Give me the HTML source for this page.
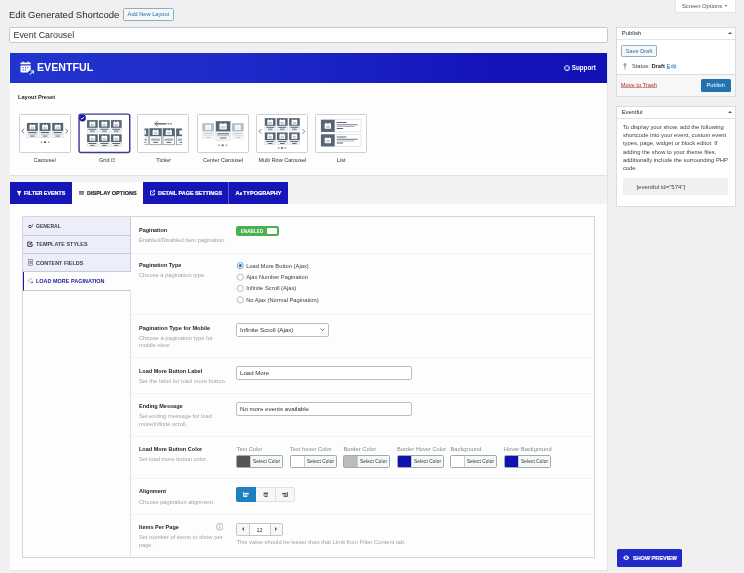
<!DOCTYPE html>
<html>
<head>
<meta charset="utf-8">
<title>Edit Generated Shortcode</title>
<style>
*{box-sizing:border-box;margin:0;padding:0}
html,body{width:744px;height:573px;overflow:hidden;background:#f0f0f1;font-family:"Liberation Sans",sans-serif;color:#1d2327}
#root{will-change:transform;position:absolute;left:0;top:0;width:744px;height:573px;overflow:hidden}
.a{position:absolute}
.t{position:absolute;white-space:nowrap;line-height:1}
.b{font-weight:bold}
.box{position:absolute;background:#fff;border:1px solid #dbdcde}
/* labels in settings rows */
.lbl{position:absolute;left:138.9px;white-space:nowrap;line-height:1;font-weight:bold;font-size:5.7px;color:#23282d;letter-spacing:.05px}
.dsc{position:absolute;left:138.9px;white-space:nowrap;line-height:1;font-size:5.6px;color:#a3a3a3}
.div{position:absolute;left:131px;width:461px;height:1px;background:#f3f3f3}
.inp{position:absolute;background:#fff;border:1px solid #bcbec2;border-radius:2px}
.itx{position:absolute;white-space:nowrap;line-height:1;font-size:5.7px;color:#2c3338}
.nav{position:absolute;left:23px;width:107px;height:18.2px;background:#eeeefa;border-bottom:1px solid #c9c9dc}
.navt{position:absolute;left:35.8px;white-space:nowrap;line-height:1;font-weight:bold;font-size:5.4px;color:#3c3c4a;letter-spacing:.08px}
.tab{position:absolute;top:182.3px;height:21.7px;background:#1515b8}
.tabt{position:absolute;white-space:nowrap;line-height:1;font-weight:bold;font-size:5.3px;color:#fff;letter-spacing:.05px;-webkit-text-stroke:.2px currentColor}
.pre{position:absolute;top:113.8px;width:51.6px;height:39px;background:#fff;border:1px solid #d0d0d0;border-radius:1.5px}
.prel{position:absolute;top:158.2px;white-space:nowrap;line-height:1;font-size:5.5px;color:#333}
.cbl{position:absolute;top:446.6px;white-space:nowrap;line-height:1;font-size:5.6px;color:#8a8a8a}
.cb{position:absolute;top:455px;width:47px;height:13px;background:#f6f7f7;border:.9px solid #9aacb8;border-radius:1.5px;overflow:hidden}
.cb i{position:absolute;left:0;top:0;width:13.7px;height:100%;border-right:.8px solid #c5ced6}
.cb span{position:absolute;left:14.2px;right:0;top:3.5px;text-align:center;white-space:nowrap;line-height:1;font-size:4.78px;letter-spacing:.1px;color:#2c3338}
.rad{position:absolute;left:237px;width:6.6px;height:6.6px;border:.8px solid #8c8f94;border-radius:50%;background:#fff}
.radt{position:absolute;left:246.2px;white-space:nowrap;line-height:1;font-size:5.6px;color:#3c434a}
</style>
</head>
<body>
<div id="root">

<!-- Screen options -->
<div class="a" style="left:675px;top:-1px;width:61px;height:14px;background:#fff;border:1px solid #e4e5e7;border-top:none;border-radius:0 0 2px 2px"></div>
<div class="t" style="left:681.9px;top:4px;font-size:5.85px;color:#50575e">Screen Options</div>
<div class="a" style="left:724.8px;top:5.100px;width:0;height:0;border-left:1.800px solid transparent;border-right:1.800px solid transparent;border-top:2.600px solid #50575e"></div>

<!-- Page title -->
<div class="t" id="h1" style="left:9px;top:10px;color:#1d2327;font-size:9.55px">Edit Generated Shortcode</div>
<div class="a" style="left:122.6px;top:7.9px;width:51.3px;height:12.7px;background:#f6f7f7;border:.9px solid #8fadc4;border-radius:1.5px"></div>
<div class="t" id="addnew" style="left:127.6px;top:12.2px;font-size:5.68px;color:#2271b1">Add New Layout</div>

<!-- Title input -->
<div class="a" style="left:9px;top:27px;width:599px;height:16px;background:#fff;border:1px solid #c8c9cc;border-radius:2px"></div>
<div class="t" id="titleval" style="left:13.5px;top:30.7px;font-size:8.88px;color:#2c3338">Event Carousel</div>

<!-- Main white container -->
<div class="a" style="left:9px;top:53px;width:599px;height:518px;background:#fdfdfd;border:1px solid #e3e4e6;border-left-color:#f5f5f6;border-bottom-color:#e6e7e9;border-top:none"></div>

<!-- Blue header -->
<div class="a" style="left:9.6px;top:53px;width:597.4px;height:30px;background:linear-gradient(90deg,#2234d0 0%,#1d29c8 40%,#1414b9 80%,#1111b6 100%)"></div>
<svg class="a" style="left:20.2px;top:60.5px" width="14.5" height="14" viewBox="0 0 14.5 14">
  <rect x=".5" y="1.400" width="10.200" height="1.900" rx=".5" fill="#fff"/>
  <rect x="2.700" y=".4" width="1.100" height="1.600" rx=".3" fill="#fff"/><rect x="7.600" y=".4" width="1.100" height="1.600" rx=".3" fill="#fff"/>
  <path d="M.5 4.500h10.200v3.900L7.700 11.500H1.400a.9.900 0 0 1-.9-.9z" fill="#fff"/>
  <path d="M2.500 6.200h1.200v1.100H2.500zM4.900 6.200h1.200v1.100H4.900zM7.300 6.200h1.200v1.100H7.300zM2.500 8.400h1.200v1.100H2.500zM4.900 8.400h1.200v1.100H4.900z" fill="#2435cf"/>
  <path d="M10 13.300l3.300-3M11.200 9.900h2.400v2.400" fill="none" stroke="#b9defe" stroke-width="1.100" stroke-linecap="round" stroke-linejoin="round"/>
</svg>
<div class="t b" id="logo" style="left:36.7px;top:61.9px;color:#fff;font-size:11.5px;transform-origin:0 0;transform:scaleX(.925)">EVENTFUL</div>
<svg class="a" style="left:563.700px;top:65.100px" width="6" height="6" viewBox="0 0 6 6"><circle cx="3" cy="3" r="2.300" fill="none" stroke="#e4e7ff" stroke-width="1.150"/><path d="M1.200 1.200l1 1M4.800 1.200l-1 1M1.200 4.800l1-1M4.800 4.800l-1-1" stroke="#1616b6" stroke-width=".5"/></svg>
<div class="t b" id="support" style="left:571.7px;top:64.7px;font-size:6.29px;color:#fff">Support</div>

<!-- Layout Preset -->
<div class="t b" id="lp" style="left:18.4px;top:93.6px;color:#23282d;font-size:6.0px;letter-spacing:0;transform-origin:0 0;transform:scaleX(0.9348)">Layout Preset</div>
<div id="presets">
<div class="pre" style="left:19px;top:114px;width:52px;height:39px"></div>
<svg class="a" style="left:76px;top:111px" width="58" height="45" viewBox="76 111 58 45"><rect x="79.050" y="114.100" width="50.700" height="38.300" rx="2" fill="#fff" stroke="#3b3b98" stroke-width="1.450"/></svg>
<div class="pre" style="left:137px;top:114px;width:52px;height:39px"></div>
<div class="pre" style="left:197px;top:114px;width:52px;height:39px"></div>
<div class="pre" style="left:256px;top:114px;width:52px;height:39px"></div>
<div class="pre" style="left:315px;top:114px;width:52px;height:39px"></div>
<svg class="a" style="left:0;top:100px" width="380" height="60" viewBox="0 100 380 60"><rect x="27" y="123" width="10.8" height="14.8" fill="#f3f4f6" stroke="#c5cad0" stroke-width=".45"/><rect x="27" y="123" width="10.8" height="7.9" fill="#566473"/><rect x="29.5" y="124.9" width="5.8" height="4.7" rx=".5" fill="#fff"/><rect x="30.4" y="124.1" width="0.8" height="1.300" fill="#fff"/><rect x="33.6" y="124.1" width="0.8" height="1.300" fill="#fff"/><path d="M30.5 127.25h3.8M30.5 128.45h3.8M31.7 126.55v2.600M33.1 126.55v2.600" stroke="#566473" stroke-width=".45" opacity=".55"/><rect x="28.3" y="132" width="8.2" height="1" fill="#566473"/><rect x="28.3" y="133.7" width="8.2" height=".8" fill="#a9b0b8"/><rect x="30.02" y="135.6" width="4.75" height=".9" fill="#566473"/><rect x="39.65" y="123" width="10.8" height="14.8" fill="#f3f4f6" stroke="#c5cad0" stroke-width=".45"/><rect x="39.65" y="123" width="10.8" height="7.9" fill="#566473"/><rect x="42.15" y="124.9" width="5.8" height="4.7" rx=".5" fill="#fff"/><rect x="43.05" y="124.1" width="0.8" height="1.300" fill="#fff"/><rect x="46.25" y="124.1" width="0.8" height="1.300" fill="#fff"/><path d="M43.15 127.25h3.8M43.15 128.45h3.8M44.35 126.55v2.600M45.75 126.55v2.600" stroke="#566473" stroke-width=".45" opacity=".55"/><rect x="40.95" y="132" width="8.2" height="1" fill="#566473"/><rect x="40.95" y="133.7" width="8.2" height=".8" fill="#a9b0b8"/><rect x="42.67" y="135.6" width="4.75" height=".9" fill="#566473"/><rect x="52.3" y="123" width="10.8" height="14.8" fill="#f3f4f6" stroke="#c5cad0" stroke-width=".45"/><rect x="52.3" y="123" width="10.8" height="7.9" fill="#566473"/><rect x="54.8" y="124.9" width="5.8" height="4.7" rx=".5" fill="#fff"/><rect x="55.7" y="124.1" width="0.8" height="1.300" fill="#fff"/><rect x="58.9" y="124.1" width="0.8" height="1.300" fill="#fff"/><path d="M55.8 127.25h3.8M55.8 128.45h3.8M57 126.55v2.600M58.4 126.55v2.600" stroke="#566473" stroke-width=".45" opacity=".55"/><rect x="53.6" y="132" width="8.2" height="1" fill="#566473"/><rect x="53.6" y="133.7" width="8.2" height=".8" fill="#a9b0b8"/><rect x="55.32" y="135.6" width="4.75" height=".9" fill="#566473"/><path d="M24.2 128.8L21.9 131.1L24.2 133.4" fill="none" stroke="#566473" stroke-width=".85"/><path d="M65.5 128.8L67.8 131.1L65.5 133.4" fill="none" stroke="#566473" stroke-width=".85"/><circle cx="41.5" cy="142.2" r="1" fill="#a4abb3"/><circle cx="45.05" cy="142.2" r="1.100" fill="#566473"/><circle cx="48.6" cy="142.2" r="1" fill="#a4abb3"/><rect x="87.1" y="120.1" width="10.6" height="12.4" fill="#f3f4f6" stroke="#c5cad0" stroke-width=".45"/><rect x="87.1" y="120.1" width="10.6" height="7.7" fill="#566473"/><rect x="89.5" y="121.9" width="5.8" height="4.7" rx=".5" fill="#fff"/><rect x="90.4" y="121.1" width="0.8" height="1.300" fill="#fff"/><rect x="93.6" y="121.1" width="0.8" height="1.300" fill="#fff"/><path d="M90.5 124.25h3.8M90.5 125.45h3.8M91.7 123.55v2.600M93.1 123.55v2.600" stroke="#566473" stroke-width=".45" opacity=".55"/><rect x="88.4" y="128.8" width="8" height="1" fill="#566473"/><rect x="90.1" y="130.7" width="4.600" height=".9" fill="#566473"/><rect x="99.05" y="120.1" width="10.6" height="12.4" fill="#f3f4f6" stroke="#c5cad0" stroke-width=".45"/><rect x="99.05" y="120.1" width="10.6" height="7.7" fill="#566473"/><rect x="101.45" y="121.9" width="5.8" height="4.7" rx=".5" fill="#fff"/><rect x="102.35" y="121.1" width="0.8" height="1.300" fill="#fff"/><rect x="105.55" y="121.1" width="0.8" height="1.300" fill="#fff"/><path d="M102.45 124.25h3.8M102.45 125.45h3.8M103.65 123.55v2.600M105.05 123.55v2.600" stroke="#566473" stroke-width=".45" opacity=".55"/><rect x="100.35" y="128.8" width="8" height="1" fill="#566473"/><rect x="102.05" y="130.7" width="4.600" height=".9" fill="#566473"/><rect x="111" y="120.1" width="10.6" height="12.4" fill="#f3f4f6" stroke="#c5cad0" stroke-width=".45"/><rect x="111" y="120.1" width="10.6" height="7.7" fill="#566473"/><rect x="113.4" y="121.9" width="5.8" height="4.7" rx=".5" fill="#fff"/><rect x="114.3" y="121.1" width="0.8" height="1.300" fill="#fff"/><rect x="117.5" y="121.1" width="0.8" height="1.300" fill="#fff"/><path d="M114.4 124.25h3.8M114.4 125.45h3.8M115.6 123.55v2.600M117 123.55v2.600" stroke="#566473" stroke-width=".45" opacity=".55"/><rect x="112.3" y="128.8" width="8" height="1" fill="#566473"/><rect x="114" y="130.7" width="4.600" height=".9" fill="#566473"/><rect x="87.1" y="134.3" width="10.6" height="12.4" fill="#f3f4f6" stroke="#c5cad0" stroke-width=".45"/><rect x="87.1" y="134.3" width="10.6" height="7.7" fill="#566473"/><rect x="89.5" y="136.1" width="5.8" height="4.7" rx=".5" fill="#fff"/><rect x="90.4" y="135.3" width="0.8" height="1.300" fill="#fff"/><rect x="93.6" y="135.3" width="0.8" height="1.300" fill="#fff"/><path d="M90.5 138.45h3.8M90.5 139.65h3.8M91.7 137.75v2.600M93.1 137.75v2.600" stroke="#566473" stroke-width=".45" opacity=".55"/><rect x="88.4" y="143" width="8" height="1" fill="#566473"/><rect x="90.1" y="144.9" width="4.600" height=".9" fill="#566473"/><rect x="99.05" y="134.3" width="10.6" height="12.4" fill="#f3f4f6" stroke="#c5cad0" stroke-width=".45"/><rect x="99.05" y="134.3" width="10.6" height="7.7" fill="#566473"/><rect x="101.45" y="136.1" width="5.8" height="4.7" rx=".5" fill="#fff"/><rect x="102.35" y="135.3" width="0.8" height="1.300" fill="#fff"/><rect x="105.55" y="135.3" width="0.8" height="1.300" fill="#fff"/><path d="M102.45 138.45h3.8M102.45 139.65h3.8M103.65 137.75v2.600M105.05 137.75v2.600" stroke="#566473" stroke-width=".45" opacity=".55"/><rect x="100.35" y="143" width="8" height="1" fill="#566473"/><rect x="102.05" y="144.9" width="4.600" height=".9" fill="#566473"/><rect x="111" y="134.3" width="10.6" height="12.4" fill="#f3f4f6" stroke="#c5cad0" stroke-width=".45"/><rect x="111" y="134.3" width="10.6" height="7.7" fill="#566473"/><rect x="113.4" y="136.1" width="5.8" height="4.7" rx=".5" fill="#fff"/><rect x="114.3" y="135.3" width="0.8" height="1.300" fill="#fff"/><rect x="117.5" y="135.3" width="0.8" height="1.300" fill="#fff"/><path d="M114.4 138.45h3.8M114.4 139.65h3.8M115.6 137.75v2.600M117 137.75v2.600" stroke="#566473" stroke-width=".45" opacity=".55"/><rect x="112.3" y="143" width="8" height="1" fill="#566473"/><rect x="114" y="144.9" width="4.600" height=".9" fill="#566473"/><rect x="144.5" y="128.5" width="3.700" height="16.300" fill="#fff"/><rect x="144.5" y="128.5" width="3.700" height="7.700" fill="#566473"/><rect x="144.5" y="130.300" width="1.600" height="4.200" fill="#fff"/><rect x="147.900" y="128.5" width=".5" height="16.300" fill="#566473"/><rect x="144.5" y="138.500" width="2.400" height="2.300" fill="#a9b0b8"/><rect x="144.5" y="141.900" width="1.600" height="1" fill="#566473"/><path d="M144.500 144.600h3.700" stroke="#566473" stroke-width=".5"/><rect x="149.8" y="128.5" width="11.600" height="16.300" fill="#fff" stroke="#566473" stroke-width=".55"/><rect x="149.8" y="128.5" width="11.600" height="7.700" fill="#566473"/><rect x="152.56" y="130.18" width="6.09" height="4.94" rx=".5" fill="#fff"/><rect x="153.5" y="129.38" width="0.84" height="1.300" fill="#fff"/><rect x="156.86" y="129.38" width="0.84" height="1.300" fill="#fff"/><path d="M153.56 132.65h4.09M153.56 133.85h4.09M154.87 131.95v2.600M156.34 131.95v2.600" stroke="#566473" stroke-width=".45" opacity=".55"/><rect x="151.3" y="138.500" width="8.600" height="2.300" fill="#a9b0b8"/><rect x="153.2" y="141.900" width="4.800" height="1" fill="#566473"/><rect x="163" y="128.5" width="11.600" height="16.300" fill="#fff" stroke="#566473" stroke-width=".55"/><rect x="163" y="128.5" width="11.600" height="7.700" fill="#566473"/><rect x="165.76" y="130.18" width="6.09" height="4.94" rx=".5" fill="#fff"/><rect x="166.7" y="129.38" width="0.84" height="1.300" fill="#fff"/><rect x="170.06" y="129.38" width="0.84" height="1.300" fill="#fff"/><path d="M166.76 132.65h4.09M166.76 133.85h4.09M168.06 131.95v2.600M169.54 131.95v2.600" stroke="#566473" stroke-width=".45" opacity=".55"/><rect x="164.5" y="138.500" width="8.600" height="2.300" fill="#a9b0b8"/><rect x="166.4" y="141.900" width="4.800" height="1" fill="#566473"/><rect x="176.300" y="128.5" width="5.800" height="16.300" fill="#fff"/><rect x="176.300" y="128.5" width="5.800" height="7.700" fill="#566473"/><rect x="176.100" y="128.5" width=".5" height="16.300" fill="#566473"/><rect x="179.400" y="130.300" width="2.700" height="4.200" fill="#fff"/><rect x="177.800" y="138.500" width="4.300" height="2.300" fill="#a9b0b8"/><rect x="179.700" y="141.900" width="2.400" height="1" fill="#566473"/><path d="M176.300 144.600h5.800" stroke="#566473" stroke-width=".5"/><path d="M155.200 123.800h10.500" stroke="#64707d" stroke-width="1.500"/><path d="M165.700 123.800h7" stroke="#8a949e" stroke-width="1.500" stroke-dasharray="1.600 .7"/><path d="M157.800 121.200L154.600 123.800L157.800 126.400" fill="none" stroke="#64707d" stroke-width=".95"/><rect x="202.4" y="123.3" width="11.4" height="15.3" fill="#f7f7f8" stroke="#dfe1e4" stroke-width=".45"/><rect x="202.4" y="123.3" width="11.4" height="8.1" fill="#b7bcc1"/><rect x="205.2" y="125.3" width="5.8" height="4.7" rx=".5" fill="#fff"/><rect x="206.1" y="124.5" width="0.8" height="1.300" fill="#fff"/><rect x="209.3" y="124.5" width="0.8" height="1.300" fill="#fff"/><path d="M206.2 127.65h3.8M206.2 128.85h3.8M207.4 126.95v2.600M208.8 126.95v2.600" stroke="#b7bcc1" stroke-width=".45" opacity=".55"/><rect x="203.7" y="133" width="8.8" height="1" fill="#c2c6cb"/><rect x="203.7" y="134.9" width="8.8" height=".8" fill="#d5d8db"/><rect x="205.59" y="136.9" width="5.02" height=".9" fill="#c2c6cb"/><rect x="232.1" y="123.3" width="11.4" height="15.3" fill="#f7f7f8" stroke="#dfe1e4" stroke-width=".45"/><rect x="232.1" y="123.3" width="11.4" height="8.1" fill="#b7bcc1"/><rect x="234.9" y="125.3" width="5.8" height="4.7" rx=".5" fill="#fff"/><rect x="235.8" y="124.5" width="0.8" height="1.300" fill="#fff"/><rect x="239" y="124.5" width="0.8" height="1.300" fill="#fff"/><path d="M235.9 127.65h3.8M235.9 128.85h3.8M237.1 126.95v2.600M238.5 126.95v2.600" stroke="#b7bcc1" stroke-width=".45" opacity=".55"/><rect x="233.4" y="133" width="8.8" height="1" fill="#c2c6cb"/><rect x="233.4" y="134.9" width="8.8" height=".8" fill="#d5d8db"/><rect x="235.29" y="136.9" width="5.02" height=".9" fill="#c2c6cb"/><rect x="215.9" y="121.2" width="14.4" height="19.1" fill="#f3f4f6" stroke="#c5cad0" stroke-width=".45"/><rect x="215.9" y="121.2" width="14.4" height="10.2" fill="#566473"/><rect x="219.47" y="123.66" width="7.25" height="5.88" rx=".5" fill="#fff"/><rect x="220.6" y="122.86" width="1" height="1.300" fill="#fff"/><rect x="224.6" y="122.86" width="1" height="1.300" fill="#fff"/><path d="M220.47 126.6h5.25M220.47 127.8h5.25M222.22 125.9v2.600M223.97 125.9v2.600" stroke="#566473" stroke-width=".45" opacity=".55"/><rect x="217.2" y="133.3" width="11.8" height="1" fill="#566473"/><rect x="217.2" y="135.3" width="11.8" height=".8" fill="#a9b0b8"/><rect x="219.93" y="137.5" width="6.34" height=".9" fill="#566473"/><circle cx="219" cy="145.3" r="1" fill="#a4abb3"/><circle cx="222.7" cy="145.3" r="1.100" fill="#566473"/><circle cx="226.4" cy="145.3" r="1" fill="#a4abb3"/><rect x="264.9" y="118.2" width="10.6" height="12.1" fill="#f3f4f6" stroke="#c5cad0" stroke-width=".45"/><rect x="264.9" y="118.2" width="10.6" height="7.6" fill="#566473"/><rect x="267.3" y="119.95" width="5.8" height="4.7" rx=".5" fill="#fff"/><rect x="268.2" y="119.15" width="0.8" height="1.300" fill="#fff"/><rect x="271.4" y="119.15" width="0.8" height="1.300" fill="#fff"/><path d="M268.3 122.3h3.8M268.3 123.5h3.8M269.5 121.6v2.600M270.9 121.6v2.600" stroke="#566473" stroke-width=".45" opacity=".55"/><rect x="266.2" y="126.8" width="8" height="1" fill="#566473"/><rect x="267.9" y="128.7" width="4.600" height=".9" fill="#566473"/><rect x="277" y="118.2" width="10.6" height="12.1" fill="#f3f4f6" stroke="#c5cad0" stroke-width=".45"/><rect x="277" y="118.2" width="10.6" height="7.6" fill="#566473"/><rect x="279.4" y="119.95" width="5.8" height="4.7" rx=".5" fill="#fff"/><rect x="280.3" y="119.15" width="0.8" height="1.300" fill="#fff"/><rect x="283.5" y="119.15" width="0.8" height="1.300" fill="#fff"/><path d="M280.4 122.3h3.8M280.4 123.5h3.8M281.6 121.6v2.600M283 121.6v2.600" stroke="#566473" stroke-width=".45" opacity=".55"/><rect x="278.3" y="126.8" width="8" height="1" fill="#566473"/><rect x="280" y="128.7" width="4.600" height=".9" fill="#566473"/><rect x="289.1" y="118.2" width="10.6" height="12.1" fill="#f3f4f6" stroke="#c5cad0" stroke-width=".45"/><rect x="289.1" y="118.2" width="10.6" height="7.6" fill="#566473"/><rect x="291.5" y="119.95" width="5.8" height="4.7" rx=".5" fill="#fff"/><rect x="292.4" y="119.15" width="0.8" height="1.300" fill="#fff"/><rect x="295.6" y="119.15" width="0.8" height="1.300" fill="#fff"/><path d="M292.5 122.3h3.8M292.5 123.5h3.8M293.7 121.6v2.600M295.1 121.6v2.600" stroke="#566473" stroke-width=".45" opacity=".55"/><rect x="290.4" y="126.8" width="8" height="1" fill="#566473"/><rect x="292.1" y="128.7" width="4.600" height=".9" fill="#566473"/><rect x="264.9" y="132.5" width="10.6" height="12.1" fill="#f3f4f6" stroke="#c5cad0" stroke-width=".45"/><rect x="264.9" y="132.5" width="10.6" height="7.6" fill="#566473"/><rect x="267.3" y="134.25" width="5.8" height="4.7" rx=".5" fill="#fff"/><rect x="268.2" y="133.45" width="0.8" height="1.300" fill="#fff"/><rect x="271.4" y="133.45" width="0.8" height="1.300" fill="#fff"/><path d="M268.3 136.6h3.8M268.3 137.8h3.8M269.5 135.9v2.600M270.9 135.9v2.600" stroke="#566473" stroke-width=".45" opacity=".55"/><rect x="266.2" y="141.1" width="8" height="1" fill="#566473"/><rect x="267.9" y="143" width="4.600" height=".9" fill="#566473"/><rect x="277" y="132.5" width="10.6" height="12.1" fill="#f3f4f6" stroke="#c5cad0" stroke-width=".45"/><rect x="277" y="132.5" width="10.6" height="7.6" fill="#566473"/><rect x="279.4" y="134.25" width="5.8" height="4.7" rx=".5" fill="#fff"/><rect x="280.3" y="133.45" width="0.8" height="1.300" fill="#fff"/><rect x="283.5" y="133.45" width="0.8" height="1.300" fill="#fff"/><path d="M280.4 136.6h3.8M280.4 137.8h3.8M281.6 135.9v2.600M283 135.9v2.600" stroke="#566473" stroke-width=".45" opacity=".55"/><rect x="278.3" y="141.1" width="8" height="1" fill="#566473"/><rect x="280" y="143" width="4.600" height=".9" fill="#566473"/><rect x="289.1" y="132.5" width="10.6" height="12.1" fill="#f3f4f6" stroke="#c5cad0" stroke-width=".45"/><rect x="289.1" y="132.5" width="10.6" height="7.6" fill="#566473"/><rect x="291.5" y="134.25" width="5.8" height="4.7" rx=".5" fill="#fff"/><rect x="292.4" y="133.45" width="0.8" height="1.300" fill="#fff"/><rect x="295.6" y="133.45" width="0.8" height="1.300" fill="#fff"/><path d="M292.5 136.6h3.8M292.5 137.8h3.8M293.7 135.9v2.600M295.1 135.9v2.600" stroke="#566473" stroke-width=".45" opacity=".55"/><rect x="290.4" y="141.1" width="8" height="1" fill="#566473"/><rect x="292.1" y="143" width="4.600" height=".9" fill="#566473"/><path d="M261.3 129.1L259 131.4L261.3 133.7" fill="none" stroke="#566473" stroke-width=".85"/><path d="M302.5 129.1L304.8 131.4L302.5 133.7" fill="none" stroke="#566473" stroke-width=".85"/><circle cx="278.6" cy="148" r="1" fill="#a4abb3"/><circle cx="282" cy="148" r="1.100" fill="#566473"/><circle cx="285.4" cy="148" r="1" fill="#a4abb3"/><rect x="321" y="119.8" width="40" height="12.100" fill="#fff" stroke="#c5cad0" stroke-width=".5"/><rect x="321" y="119.8" width="13.700" height="12.100" fill="#566473"/><rect x="324.66" y="123.56" width="6.38" height="5.17" rx=".5" fill="#fff"/><rect x="325.65" y="122.77" width="0.88" height="1.300" fill="#fff"/><rect x="329.17" y="122.77" width="0.88" height="1.300" fill="#fff"/><path d="M325.66 126.15h4.38M325.66 127.35h4.38M327.08 125.45v2.600M328.62 125.45v2.600" stroke="#566473" stroke-width=".45" opacity=".55"/><rect x="336.700" y="122" width="9.700" height="1" fill="#566473"/><rect x="336.700" y="124.3" width="21" height="1" fill="#566473" opacity=".85"/><rect x="336.700" y="126" width="17.700" height=".9" fill="#a9b0b8"/><rect x="336.700" y="128" width="6.400" height="1" fill="#566473"/><rect x="321" y="134.3" width="40" height="12.100" fill="#fff" stroke="#c5cad0" stroke-width=".5"/><rect x="321" y="134.3" width="13.700" height="12.100" fill="#566473"/><rect x="324.66" y="138.07" width="6.38" height="5.17" rx=".5" fill="#fff"/><rect x="325.65" y="137.27" width="0.88" height="1.300" fill="#fff"/><rect x="329.17" y="137.27" width="0.88" height="1.300" fill="#fff"/><path d="M325.66 140.65h4.38M325.66 141.85h4.38M327.08 139.95v2.600M328.62 139.95v2.600" stroke="#566473" stroke-width=".45" opacity=".55"/><rect x="336.700" y="136.5" width="9.700" height="1" fill="#566473"/><rect x="336.700" y="138.8" width="21" height="1" fill="#566473" opacity=".85"/><rect x="336.700" y="140.5" width="17.700" height=".9" fill="#a9b0b8"/><rect x="336.700" y="142.5" width="6.400" height="1" fill="#566473"/><circle cx="82.500" cy="118" r="3.400" fill="#1b1ba4"/><path d="M80.900 118.100l1.100 1.100 2.100-2.300" fill="none" stroke="#fff" stroke-width=".9"/></svg>
<div class="prel" id="pl0" style="left:33.7px">Carousel</div>
<div class="prel" id="pl1" style="left:99.1px">Grid</div>
<div class="prel" id="pl2" style="left:156.3px">Ticker</div>
<div class="prel" id="pl3" style="left:203px">Center Carousel</div>
<div class="prel" id="pl4" style="left:258.5px">Multi Row Carousel</div>
<div class="prel" id="pl5" style="left:337px">List</div>
<svg class="a" style="left:111.100px;top:157.900px" width="4.200" height="4.200" viewBox="0 0 4.200 4.200"><path d="M1.800.8H.4v3h3V2.400M2.500.3h1.400v1.400M3.800.4L1.900 2.300" fill="none" stroke="#50575e" stroke-width=".55"/></svg>
</div>

<!-- Tab bar -->
<div class="a" style="left:10px;top:175.3px;width:597px;height:28.7px;background:#f2f2f3;border-top:1px solid #e0e0e2"></div>
<div id="tabs">
<div class="tab" style="left:9.8px;width:62.2px"></div>
<div class="tab" style="left:72px;width:71.2px;background:#fdfdfd"></div>
<div class="tab" style="left:143.2px;width:85px"></div>
<div class="tab" style="left:228.5px;width:59.8px"></div>
<div class="a" style="left:228.100px;top:182.3px;width:.6px;height:21.7px;background:#5a5ad0"></div>
<svg class="a" style="left:16.800px;top:191px" width="4.300" height="4.900" viewBox="0 0 4.6 5.2"><path d="M0 0h4.600v.6L3.100 2.500v2.700L1.500 4.300V2.500L0 .6z" fill="#fff"/></svg>
<div class="tabt" id="tb1" style="left:23.8px;top:190.6px;font-size:5.9px;letter-spacing:0;transform-origin:0 0;transform:scaleX(0.9099)">FILTER EVENTS</div>
<svg class="a" style="left:79.400px;top:190.8px" width="5" height="4.600" viewBox="0 0 5 4.6"><path d="M0 .5h5M0 1.700h5M0 2.900h5M0 4.100h5" stroke="#2c3338" stroke-width=".7"/></svg>
<div class="tabt" id="tb2" style="left:86.6px;top:190.6px;color:#23282d;font-size:5.9px;letter-spacing:0;transform-origin:0 0;transform:scaleX(0.9353)">DISPLAY OPTIONS</div>
<svg class="a" style="left:149.8px;top:190.400px" width="5.400" height="5.400" viewBox="0 0 5.4 5.4"><path d="M2.400 1H.5v3.900h3.900V3M3.200.5h1.700v1.700M4.800.6L2.500 2.900" fill="none" stroke="#fff" stroke-width=".85"/></svg>
<div class="tabt" id="tb3" style="left:157.7px;top:190.6px;font-size:5.9px;letter-spacing:0;transform-origin:0 0;transform:scaleX(0.9194)">DETAIL PAGE SETTINGS</div>
<div class="tabt" id="tb4i" style="left:235.600px;top:190.6px;font-size:5.6px">A<span style="font-size:3.4px;vertical-align:-.1px">A</span></div>
<div class="tabt" id="tb4" style="left:243.2px;top:190.6px;font-size:5.9px;letter-spacing:0;transform-origin:0 0;transform:scaleX(0.9333)">TYPOGRAPHY</div>
</div>

<!-- Inner settings panel -->
<div class="a" style="left:22.4px;top:216.4px;width:572.4px;height:341.2px;background:#fdfdfd;border:1px solid #d6d6d9"></div>
<div id="nav">
<div class="nav" style="top:217.4px"></div>
<div class="nav" style="top:235.6px"></div>
<div class="nav" style="top:253.8px"></div>
<div class="a" style="left:23px;top:272px;width:107px;height:18.6px;background:#fdfdfd;border-left:1.6px solid #1a1aa8;border-bottom:1px solid #c9c9cc"></div>
<div class="a" style="left:129.600px;top:217.4px;width:1px;height:54.600px;background:#c9c9dc"></div>
<div class="a" style="left:129.600px;top:290px;width:1px;height:267px;background:#e2e2e5"></div>
<svg class="a" style="left:27.800px;top:223.400px" width="6" height="6" viewBox="0 0 6 6"><circle cx="2" cy="3.500" r="1.250" fill="none" stroke="#3c3c4a" stroke-width="1"/><circle cx="4.400" cy="1.300" r=".55" fill="#3c3c4a"/><circle cx="4.400" cy="3.100" r=".5" fill="#3c3c4a"/></svg>
<div class="navt" id="nv1" style="top:224.1px;font-size:5.7px;letter-spacing:0;transform-origin:0 0;transform:scaleX(0.8953)">GENERAL</div>
<svg class="a" style="left:27.400px;top:241.200px" width="6" height="6" viewBox="0 0 6 6"><path d="M3.300 1H.8v4.300h4.300V3" fill="none" stroke="#33333f" stroke-width="1"/><path d="M2.300 3.900l.3-1.200L4.700.6l.9.900-2.100 2.100z" fill="#33333f"/></svg>
<div class="navt" id="nv2" style="top:242.3px;font-size:5.7px;letter-spacing:0;transform-origin:0 0;transform:scaleX(0.9567)">TEMPLATE STYLES</div>
<svg class="a" style="left:28px;top:259.300px" width="5.200" height="6.600" viewBox="0 0 5.2 6.6"><rect x=".4" y=".4" width="4.300" height="5.800" fill="none" stroke="#6a6a78" stroke-width=".6"/><path d="M1.400 2.300h2.400M1.400 3.300h2.400M1.400 4.300h2.400" stroke="#3c3c4a" stroke-width=".55"/></svg>
<div class="navt" id="nv3" style="top:260.5px;font-size:5.7px;letter-spacing:0;transform-origin:0 0;transform:scaleX(0.9615)">CONTENT FIELDS</div>
<svg class="a" style="left:27.800px;top:278.400px" width="5.600" height="5.600" viewBox="0 0 5.6 5.6"><path d="M4.500 3.400a2 2 0 1 1-.4-1.900" fill="none" stroke="#8a8aa0" stroke-width=".6"/><circle cx="4.200" cy="4.300" r=".7" fill="#3c3c5a"/></svg>
<div class="navt" id="nv4" style="top:278.7px;color:#1a1a9e;font-size:5.7px;letter-spacing:0;transform-origin:0 0;transform:scaleX(0.9620)">LOAD MORE PAGINATION</div>
</div>
<div id="rows">
<!-- Pagination -->
<div class="lbl" id="l1" style="top:227px;font-size:6.0px;letter-spacing:0;transform-origin:0 0;transform:scaleX(0.9194)">Pagination</div>
<div class="dsc" id="d1" style="top:238px;font-size:5.73px">Enabled/Disabled item pagination.</div>
<div class="a" style="left:236px;top:226px;width:43px;height:10px;background:#4caf50;border-radius:2px"></div>
<div class="a" style="left:267.300px;top:227.600px;width:10px;height:6.900px;background:#fff;border-radius:1.200px"></div>
<div class="t b" id="en" style="left:240.700px;top:230px;font-size:4.5px;color:#fff;letter-spacing:.12px">ENABLED</div>
<div class="div" style="top:253px"></div>

<!-- Pagination Type -->
<div class="lbl" id="l2" style="top:262px;font-size:6.0px;letter-spacing:0;transform-origin:0 0;transform:scaleX(0.9236)">Pagination Type</div>
<div class="dsc" id="d2" style="top:273px;font-size:5.75px">Choose a pagination type.</div>
<svg class="a" style="left:236px;top:261px" width="9" height="44" viewBox="236 261 9 44"><circle cx="240.300" cy="265.6" r="3.100" fill="#fff" stroke="#4a86be" stroke-width=".75"/><circle cx="240.300" cy="265.6" r="1.650" fill="#2a6fb0"/><circle cx="240.300" cy="277.2" r="3.100" fill="#fff" stroke="#9a9da2" stroke-width=".7"/><circle cx="240.300" cy="288.4" r="3.100" fill="#fff" stroke="#9a9da2" stroke-width=".7"/><circle cx="240.300" cy="299.8" r="3.100" fill="#fff" stroke="#9a9da2" stroke-width=".7"/></svg>
<div class="radt" id="r1" style="top:264px;font-size:5.77px">Load More Button (Ajax)</div>
<div class="radt" id="r2" style="top:275px;font-size:5.72px">Ajax Number Pagination</div>
<div class="radt" id="r3" style="top:286px;font-size:5.82px">Infinite Scroll (Ajax)</div>
<div class="radt" id="r4" style="top:298px;font-size:5.74px">No Ajax (Normal Pagination)</div>
<div class="div" style="top:314.100px"></div>

<!-- Mobile -->
<div class="lbl" id="l3" style="top:325px;font-size:6.0px;letter-spacing:0;transform-origin:0 0;transform:scaleX(0.9340)">Pagination Type for Mobile</div>
<div class="dsc" id="d3" style="top:336px;font-size:5.79px">Choose a pagination type for</div>
<div class="dsc" id="d3b" style="top:343px;font-size:5.73px">mobile view.</div>
<div class="inp" style="left:236px;top:323px;width:93px;height:14px"></div>
<div class="itx" id="sel" style="left:240px;top:327px;font-size:6.21px">Infinite Scroll (Ajax)</div>
<svg class="a" style="left:320.200px;top:328.200px" width="5.200" height="3.400" viewBox="0 0 4.6 3"><path d="M.5.500L2.300 2.300 4.100.5" fill="none" stroke="#50575e" stroke-width=".8"/></svg>
<div class="div" style="top:357px"></div>

<!-- Label -->
<div class="lbl" id="l4" style="top:368px;font-size:6.0px;letter-spacing:0;transform-origin:0 0;transform:scaleX(0.9203)">Load More Button Label</div>
<div class="dsc" id="d4" style="top:379px;font-size:5.81px">Set the label for load more button.</div>
<div class="inp" style="left:236px;top:366px;width:175.500px;height:14px"></div>
<div class="itx" id="i4" style="left:240px;top:370px;font-size:6.08px">Load More</div>
<div class="div" style="top:393px"></div>

<!-- Ending -->
<div class="lbl" id="l5" style="top:403px;font-size:6.0px;letter-spacing:0;transform-origin:0 0;transform:scaleX(0.9209)">Ending Message</div>
<div class="dsc" id="d5" style="top:414px;font-size:5.74px">Set ending message for load</div>
<div class="dsc" id="d5b" style="top:422px;font-size:5.81px">more/infinite scroll.</div>
<div class="inp" style="left:236px;top:402px;width:175.500px;height:13.500px"></div>
<div class="itx" id="i5" style="left:240px;top:406px;font-size:6.11px">No more events available</div>
<div class="div" style="top:436.400px"></div>

<!-- Color -->
<div class="lbl" id="l6" style="top:446px;font-size:6.0px;letter-spacing:0;transform-origin:0 0;transform:scaleX(0.9203)">Load More Button Color</div>
<div class="dsc" id="d6" style="top:457px;font-size:5.74px">Set load more button color.</div>
<div class="cbl" id="c1" style="left:236.500px;font-size:5.78px">Text Color</div>
<div class="cbl" id="c2" style="left:290px;font-size:5.71px">Text hover Color</div>
<div class="cbl" id="c3" style="left:343.400px;font-size:5.77px">Border Color</div>
<div class="cbl" id="c4" style="left:396.900px;font-size:5.73px">Border Hover Color</div>
<div class="cbl" id="c5" style="left:450.400px;font-size:5.80px">Background</div>
<div class="cbl" id="c6" style="left:503.900px;font-size:5.78px">Hover Background</div>
<div class="cb" style="left:236px"><i style="background:#555"></i><span>Select Color</span></div>
<div class="cb" style="left:290px"><i style="background:#fff"></i><span>Select Color</span></div>
<div class="cb" style="left:343px"><i style="background:#bbb"></i><span>Select Color</span></div>
<div class="cb" style="left:397px"><i style="background:#1212b0"></i><span>Select Color</span></div>
<div class="cb" style="left:450px"><i style="background:#fff"></i><span>Select Color</span></div>
<div class="cb" style="left:504px"><i style="background:#1212b0"></i><span>Select Color</span></div>
<div class="div" style="top:477.900px"></div>

<!-- Alignment -->
<div class="lbl" id="l7" style="top:488px;font-size:6.0px;letter-spacing:0;transform-origin:0 0;transform:scaleX(0.9201)">Alignment</div>
<div class="dsc" id="d7" style="top:500px;font-size:5.72px">Choose pagination alignment.</div>
<div class="a" style="left:236px;top:487px;width:58.700px;height:15px;background:#f7f7f7;border:1px solid #e0e0e0;border-radius:2px"></div>
<div class="a" style="left:236px;top:487px;width:20px;height:15px;background:#1d80c0;border-radius:2px 0 0 2px"></div>
<div class="a" style="left:275.300px;top:488.200px;width:1px;height:13px;background:#e0e0e0"></div>
<svg class="a" style="left:243.200px;top:491.500px" width="5.900" height="5.900" viewBox="0 0 5.4 5.4"><path d="M.4 0v5.400" stroke="#fff" stroke-width=".8"/><rect x="1.200" y=".8" width="4" height="1.500" fill="#fff"/><rect x="1.200" y="3.100" width="2.600" height="1.500" fill="#fff"/></svg>
<svg class="a" style="left:262.600px;top:491.500px" width="5.900" height="5.900" viewBox="0 0 5.4 5.4"><path d="M0 2.700h5.400" stroke="#50575e" stroke-width=".7"/><rect x=".6" y=".5" width="4.200" height="1.300" fill="#50575e"/><rect x="1.300" y="3.600" width="2.800" height="1.300" fill="#50575e"/></svg>
<svg class="a" style="left:282px;top:491.500px" width="5.900" height="5.900" viewBox="0 0 5.4 5.4"><path d="M5 0v5.400" stroke="#50575e" stroke-width=".8"/><rect x=".2" y=".8" width="4" height="1.500" fill="#50575e"/><rect x="1.600" y="3.100" width="2.600" height="1.500" fill="#50575e"/></svg>
<div class="div" style="top:513.500px"></div>

<!-- Items per page -->
<div class="lbl" id="l8" style="top:524px;font-size:6.0px;letter-spacing:0;transform-origin:0 0;transform:scaleX(0.9272)">Items Per Page</div>
<div class="dsc" id="d8" style="top:535px;font-size:5.82px">Set number of items to show per</div>
<div class="dsc" id="d8b" style="top:543px">page.</div>
<svg class="a" style="left:215.500px;top:523.200px" width="7.600" height="7.600" viewBox="0 0 7 7"><circle cx="3.500" cy="3.500" r="3.100" fill="none" stroke="#8c8f94" stroke-width=".55"/><path d="M3.500 3v2.300" stroke="#8c8f94" stroke-width=".7"/><circle cx="3.500" cy="1.900" r=".45" fill="#8c8f94"/></svg>
<div class="inp" style="left:236px;top:523px;width:46.700px;height:13px;border-color:#c2c4c8"></div>
<div class="a" style="left:237px;top:524px;width:12.700px;height:11px;background:#f7f7f7;border-right:1px solid #c8cacd"></div>
<div class="a" style="left:269.900px;top:524px;width:11.800px;height:11px;background:#f7f7f7;border-left:1px solid #c8cacd"></div>
<div class="a" style="left:241.700px;top:527.400px;width:0;height:0;border-top:2.100px solid transparent;border-bottom:2.100px solid transparent;border-right:2.800px solid #50575e"></div>
<div class="a" style="left:274.700px;top:527.400px;width:0;height:0;border-top:2.100px solid transparent;border-bottom:2.100px solid transparent;border-left:2.800px solid #50575e"></div>
<div class="itx" id="num" style="left:256.500px;top:528px;font-size:5.5px">12</div>
<div class="dsc" id="note" style="left:236.500px;top:540px;font-size:5.81px">This value should be lesser than that Limit from Filter Content tab.</div>
</div>

<!-- Publish box -->
<div class="box" style="left:616px;top:27px;width:120px;height:70px;border-color:#dbdcde"></div>
<div class="a" style="left:617px;top:39px;width:118px;height:1px;background:#e2e3e5"></div>
<div class="t" style="left:621.7px;top:30.6px;font-size:5.95px;color:#1d2327">Publish</div>
<div class="a" style="left:727.6px;top:32.3px;width:0;height:0;border-left:2px solid transparent;border-right:2px solid transparent;border-bottom:2.6px solid #50575e"></div>
<div class="a" style="left:620.6px;top:44.5px;width:36.4px;height:12.3px;background:#f6f7f7;border:.9px solid #8fadc4;border-radius:1.5px"></div>
<div class="t" id="sd" style="left:625.8px;top:49px;font-size:5.62px;color:#2271b1">Save Draft</div>
<svg class="a" style="left:622.500px;top:63.200px" width="4" height="8" viewBox="0 0 4 8"><circle cx="2" cy="1.700" r="1.150" fill="#b8babd" stroke="#82858a" stroke-width=".7"/><path d="M2 2.900v3.600" stroke="#82858a" stroke-width=".8"/></svg>
<div class="t" id="st" style="left:631.9px;top:63.5px;font-size:5.78px;color:#3c434a">Status: <b style="color:#1d2327">Draft</b> <span style="color:#2271b1;text-decoration:underline;text-decoration-color:rgba(34,113,177,.5);text-underline-offset:.4px">Edit</span></div>
<div class="a" style="left:617px;top:74px;width:118px;height:22px;background:#f6f7f7;border-top:1px solid #dcdcde"></div>
<div class="t" id="mt" style="left:620.7px;top:82.6px;font-size:5.74px;color:#b32d2e;text-decoration:underline;text-decoration-color:rgba(179,45,46,.5);text-underline-offset:.4px">Move to Trash</div>
<div class="a" style="left:700.9px;top:79px;width:30px;height:13px;background:#2271b1;border-radius:1.5px"></div>
<div class="t" id="pb" style="left:706.6px;top:82.9px;font-size:5.62px;color:#fff">Publish</div>

<!-- Eventful box -->
<div class="box" style="left:616px;top:106px;width:120px;height:101px;border-color:#dbdcde"></div>
<div class="a" style="left:617px;top:118px;width:118px;height:1px;background:#e2e3e5"></div>
<div class="t" style="left:621.7px;top:110px;font-size:5.75px;color:#1d2327">Eventful</div>
<div class="a" style="left:727.6px;top:110.8px;width:0;height:0;border-left:2px solid transparent;border-right:2px solid transparent;border-bottom:2.6px solid #50575e"></div>
<div class="a" id="evt" style="left:622.9px;top:122.6px;width:110px;font-size:5.84px;line-height:8.33px;color:#3c434a;white-space:nowrap">To display your show, add the following<br>shortcode into your event, custom event<br>types, page, widget or block editor. If<br>adding the show to your theme files,<br>additionally include the surrounding PHP<br>code.</div>
<div class="a" style="left:622.9px;top:178.1px;width:105px;height:17.4px;background:#f0f0f1"></div>
<div class="t" id="sc" style="left:636.4px;top:184px;font-size:6.05px;color:#3c434a">[eventful id="574"]</div>

<!-- Show preview -->
<div class="a" style="left:617px;top:549px;width:65.300px;height:18px;background:#2129c9;border-radius:1.5px"></div>
<svg class="a" style="left:622.7px;top:554.900px" width="6.4" height="5.6" viewBox="0 0 6.4 5.6"><path d="M.2 2.8C1.2 1.2 2.2.6 3.2.6s2 .6 3 2.2c-1 1.6-2 2.2-3 2.2S1.200 4.400.2 2.800z" fill="#fff"/><circle cx="3.2" cy="2.8" r="1.2" fill="#2128c9"/><circle cx="3.2" cy="2.8" r=".5" fill="#fff"/></svg>
<div class="t b" id="sp" style="left:632.7px;top:555px;color:#fff;font-size:6.0px;letter-spacing:0;transform-origin:0 0;transform:scaleX(0.9185);-webkit-text-stroke:.2px currentColor">SHOW PREVIEW</div>

</div>
</body>
</html>
